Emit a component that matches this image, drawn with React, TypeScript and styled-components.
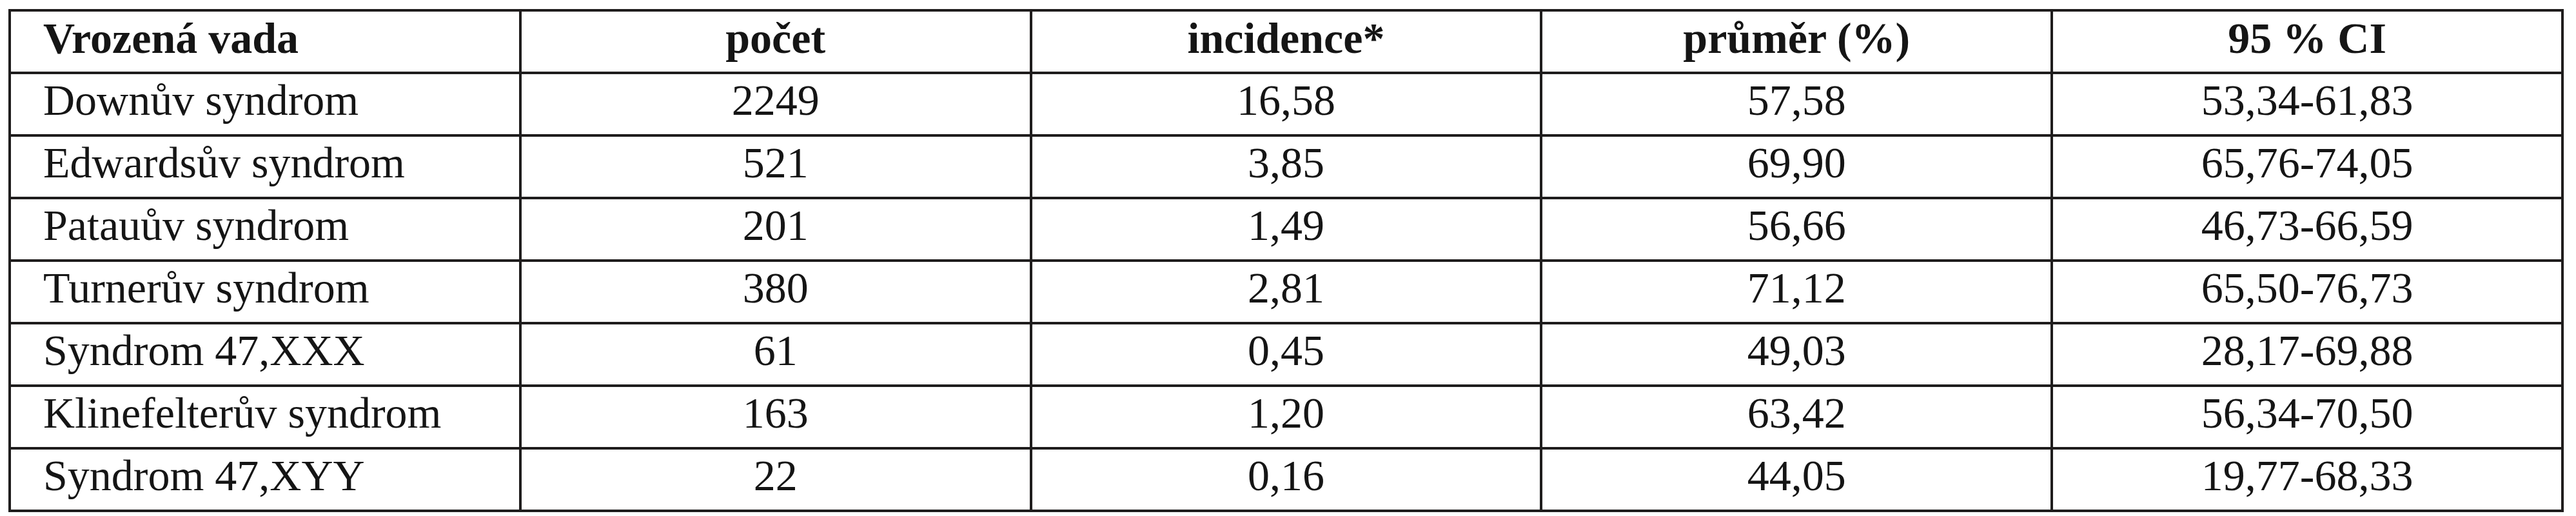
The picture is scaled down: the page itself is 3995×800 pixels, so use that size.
import React from "react";
import styled, { createGlobalStyle } from "styled-components";

const GlobalStyle = createGlobalStyle`
  html, body {
    margin: 0;
    padding: 0;
    background: #ffffff;
  }
  body {
    font-family: "Liberation Serif", "Times New Roman", serif;
    color: #151515;
  }
`;

type Row = {
  name: string;
  count: string;
  incidence: string;
  mean: string;
  ci: string;
};

const rows: Row[] = [
  { name: "Downův syndrom", count: "2249", incidence: "16,58", mean: "57,58", ci: "53,34-61,83" },
  { name: "Edwardsův syndrom", count: "521", incidence: "3,85", mean: "69,90", ci: "65,76-74,05" },
  { name: "Patauův syndrom", count: "201", incidence: "1,49", mean: "56,66", ci: "46,73-66,59" },
  { name: "Turnerův syndrom", count: "380", incidence: "2,81", mean: "71,12", ci: "65,50-76,73" },
  { name: "Syndrom 47,XXX", count: "61", incidence: "0,45", mean: "49,03", ci: "28,17-69,88" },
  { name: "Klinefelterův syndrom", count: "163", incidence: "1,20", mean: "63,42", ci: "56,34-70,50" },
  { name: "Syndrom 47,XYY", count: "22", incidence: "0,16", mean: "44,05", ci: "19,77-68,33" }
];

const App: React.FC<{}> = () => {
  return (
    <>
      <GlobalStyle />
      <Page>
        <Table>
          <colgroup>
            <col />
            <col />
            <col />
            <col />
            <col />
          </colgroup>
          <thead>
            <TableRow>
              <HeadCell $first>Vrozená vada</HeadCell>
              <HeadCell>počet</HeadCell>
              <HeadCell>incidence*</HeadCell>
              <HeadCell>průměr (%)</HeadCell>
              <HeadCell>95 % CI</HeadCell>
            </TableRow>
          </thead>
          <tbody>
            {rows.map(r => (
              <TableRow key={r.name}>
                <Cell $first>{r.name}</Cell>
                <Cell>{r.count}</Cell>
                <Cell>{r.incidence}</Cell>
                <Cell>{r.mean}</Cell>
                <Cell>{r.ci}</Cell>
              </TableRow>
            ))}
          </tbody>
        </Table>
      </Page>
    </>
  );
};

export default App;

const Page = styled.div`
  width: 3995px;
  height: 800px;
  padding: 14px 0 0 13px;
  box-sizing: border-box;
`;

const Table = styled.table`
  width: 3963px;
  border-collapse: collapse;
  table-layout: fixed;
  border: 4px solid #1f1d1d;
`;

const TableRow = styled.tr`
  height: 97px;
`;

const HeadCell = styled.th<{ $first?: boolean }>`
  border: 4px solid #1f1d1d;
  padding: 0 0 10px ${p => (p.$first ? "50px" : "0")};
  text-align: ${p => (p.$first ? "left" : "center")};
  vertical-align: middle;
  font-size: 68px;
  font-weight: 700;
  line-height: 1.1;
  white-space: nowrap;
`;

const Cell = styled.td<{ $first?: boolean }>`
  border: 4px solid #1f1d1d;
  padding: 0 0 12px ${p => (p.$first ? "50px" : "0")};
  text-align: ${p => (p.$first ? "left" : "center")};
  vertical-align: middle;
  font-size: 68px;
  font-weight: 400;
  line-height: 1.1;
  white-space: nowrap;
`;
